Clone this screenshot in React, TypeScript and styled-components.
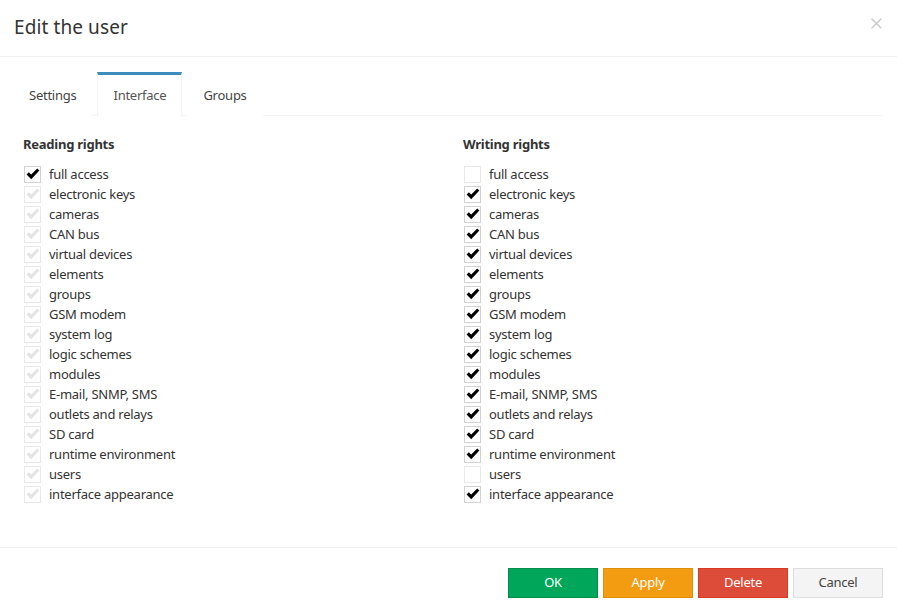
import React, {useState} from 'react';
import styled, {createGlobalStyle} from 'styled-components';

const GlobalStyle = createGlobalStyle`
  html, body {
    margin: 0;
    padding: 0;
    background: #fff;
  }
  body {
    font-family: "Noto Sans", "Open Sans", sans-serif;
    font-size: 13px;
    letter-spacing: -0.25px;
    color: #333;
  }
`

const rights = [
    'full access',
    'electronic keys',
    'cameras',
    'CAN bus',
    'virtual devices',
    'elements',
    'groups',
    'GSM modem',
    'system log',
    'logic schemes',
    'modules',
    'E-mail, SNMP, SMS',
    'outlets and relays',
    'SD card',
    'runtime environment',
    'users',
    'interface appearance',
]

type CheckState = 'on' | 'off' | 'ghost'

const CheckBox = ({state}: { state: CheckState }) => (
    <Box state={state}>
        {state !== 'off' && (
            <svg width="14" height="12" viewBox="0 0 14 12">
                <path d="M0.6 6.4 L2.8 4.2 L5.2 6.6 L11.2 0.4 L13.4 2.6 L5.2 11.2 Z"
                      fill={state === 'on' ? '#000' : '#e4e4e4'}/>
            </svg>
        )}
    </Box>
)

const RightsColumn = ({title, states}: { title: string, states: CheckState[] }) => (
    <Column>
        <ColumnTitle>{title}</ColumnTitle>
        <List>
            {rights.map((r, i) => (
                <Row key={r}>
                    <CheckBox state={states[i]}/>
                    <RowLabel>{r}</RowLabel>
                </Row>
            ))}
        </List>
    </Column>
)

export default function App() {
    const [tab, setTab] = useState('Interface')
    const reading: CheckState[] = rights.map((_, i) => i === 0 ? 'on' : 'ghost')
    const writing: CheckState[] = rights.map((r) => r === 'full access' || r === 'users' ? 'off' : 'on')

    return (
        <>
            <GlobalStyle/>
            <Modal>
                <Header>
                    <Title>Edit the user</Title>
                    <Close>×</Close>
                </Header>
                <Body>
                    <Tabs>
                        {['Settings', 'Interface', 'Groups'].map(t => (
                            <Tab key={t} active={t === tab} onClick={() => setTab(t)}>{t}</Tab>
                        ))}
                    </Tabs>
                    <TabContent>
                        <RightsColumn title={'Reading rights'} states={reading}/>
                        <RightsColumn title={'Writing rights'} states={writing}/>
                    </TabContent>
                </Body>
                <Footer>
                    <Button kind={'ok'}>OK</Button>
                    <Button kind={'apply'}>Apply</Button>
                    <Button kind={'delete'}>Delete</Button>
                    <Button kind={'cancel'}>Cancel</Button>
                </Footer>
            </Modal>
        </>
    )
}

const Modal = styled.div`
  width: 897px;
  height: 611px;
  display: flex;
  flex-direction: column;
  background: #fff;
`

const Header = styled.div`
  height: 56px;
  border-bottom: 1px solid #f0f0f0;
  display: flex;
  align-items: center;
  justify-content: space-between;
  padding: 0 14px 0 14px;
`

const Title = styled.h4`
  margin: 0;
  font-size: 19px;
  font-weight: normal;
  color: #333;
  letter-spacing: 0.1px;
  margin-top: -2px;
`

const Close = styled.span`
  font-size: 24px;
  font-weight: 300;
  line-height: 1;
  color: #c4c4c4;
  margin-top: -11px;
  margin-right: 0;
  cursor: pointer;
`

const Body = styled.div`
  padding: 15px 14px 0 13px;
  height: 475px;
`

const Tabs = styled.div`
  display: flex;
  height: 43px;
  border-bottom: 1px solid #f4f4f4;
`

const Tab = styled.div<{ active: boolean }>`
  box-sizing: border-box;
  height: 44px;
  padding: 0 15px 2px 15px;
  margin-right: 5px;
  display: flex;
  align-items: center;
  color: ${props => props.active ? '#555' : '#444'};
  border-top: 3px solid ${props => props.active ? '#3c8dbc' : 'transparent'};
  border-left: 1px solid ${props => props.active ? '#f4f4f4' : 'transparent'};
  border-right: 1px solid ${props => props.active ? '#f4f4f4' : 'transparent'};
  background: #fff;
  cursor: pointer;
`

const TabContent = styled.div`
  display: grid;
  grid-template-columns: 440px 1fr;
  padding: 19px 10px 0 10px;
`

const Column = styled.div`
  display: flex;
  flex-direction: column;
`

const ColumnTitle = styled.div`
  font-weight: bold;
  color: #333;
  height: 20px;
  line-height: 18px;
  margin-bottom: 9px;
`

const List = styled.div`
  display: flex;
  flex-direction: column;
`

const Row = styled.label`
  display: flex;
  align-items: center;
  height: 20px;
  gap: 8px;
`

const Box = styled.span<{ state: CheckState }>`
  box-sizing: border-box;
  width: 17px;
  height: 17px;
  margin-left: 1px;
  border: 1px solid ${props => props.state === 'on' ? '#d2d2d2' : '#e8e8e8'};
  display: flex;
  align-items: center;
  justify-content: center;
  background: #fff;
`

const RowLabel = styled.span`
  color: #333;
  line-height: 18px;
  margin-top: -1px;
`

const Footer = styled.div`
  border-top: 1px solid #f0f0f0;
  display: flex;
  justify-content: flex-end;
  gap: 5px;
  padding: 20px 14px 0 0;
  flex: 1;
`

const colors = {
    ok: {bg: '#00a65a', border: '#008d4c', color: '#fff'},
    apply: {bg: '#f39c12', border: '#e08e0b', color: '#fff'},
    delete: {bg: '#dd4b39', border: '#d73925', color: '#fff'},
    cancel: {bg: '#f4f4f4', border: '#ddd', color: '#444'},
}

const Button = styled.button<{ kind: keyof typeof colors }>`
  box-sizing: border-box;
  width: 90px;
  height: 30px;
  padding: 0 0 2px 0;
  border: 1px solid ${props => colors[props.kind].border};
  background: ${props => colors[props.kind].bg};
  color: ${props => colors[props.kind].color};
  font-family: inherit;
  font-size: 13px;
  letter-spacing: -0.25px;
  border-radius: 0;
  cursor: pointer;
`
